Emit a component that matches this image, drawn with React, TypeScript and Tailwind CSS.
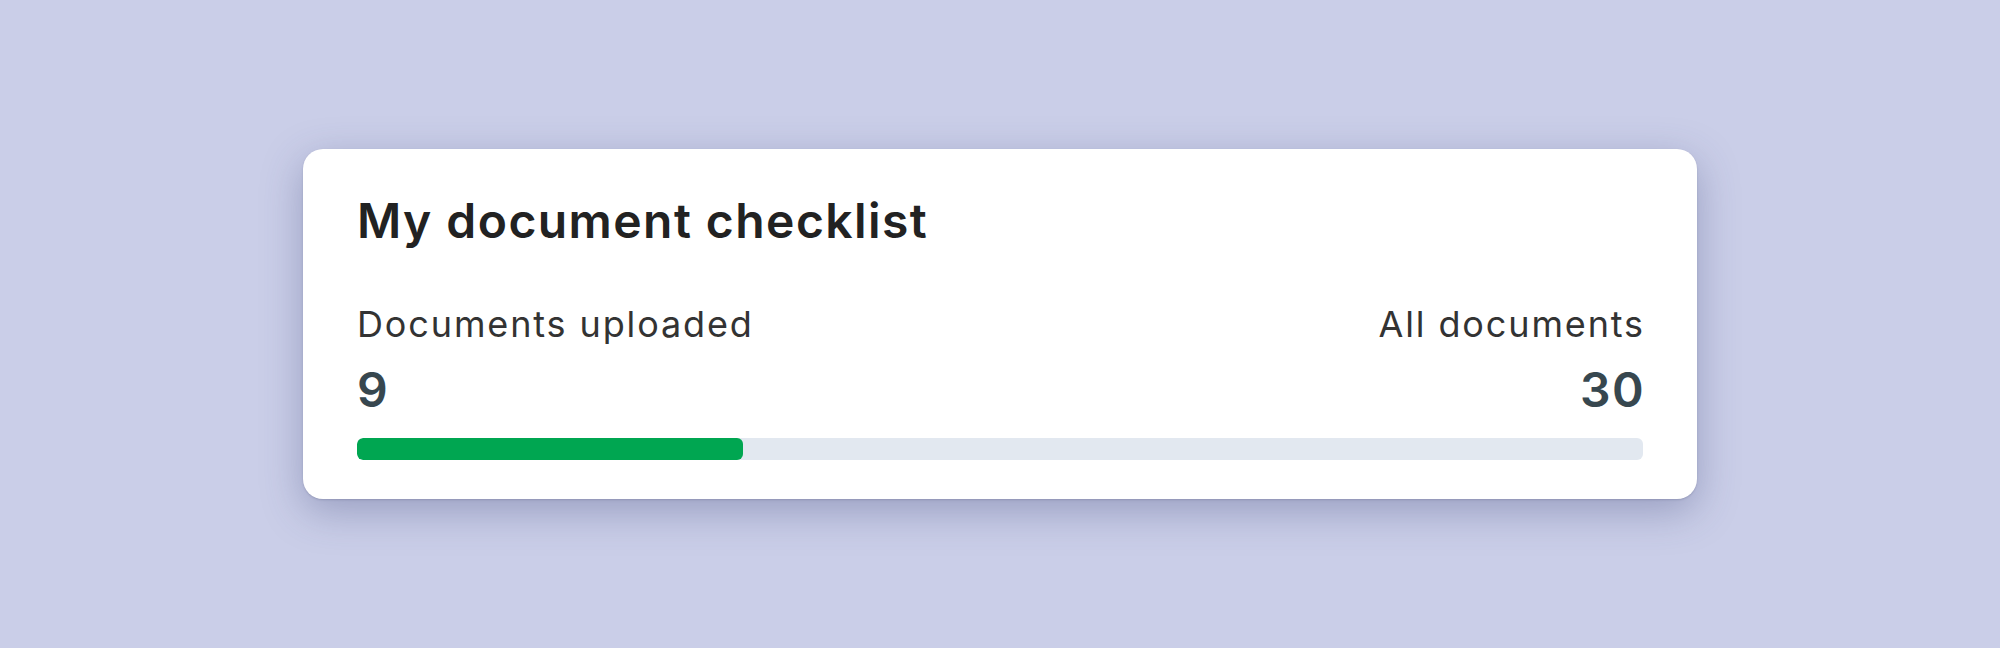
export default function App() {
  const uploaded = 9;
  const total = 30;
  const pct = (uploaded / total) * 100;

  return (
    <div
      className="flex h-[648px] w-full items-center justify-center bg-[#cacee8]"
      style={{ fontFamily: "Inter, 'Noto Sans', sans-serif" }}
    >
      <div className="w-[1394px] rounded-[20px] bg-white px-[54px] pt-[43px] pb-[39px] shadow-[0_1px_2px_rgba(40,45,80,0.18),0_12px_40px_rgba(60,68,120,0.35)]">
        <h2 className="text-[48px] leading-[58px] font-semibold tracking-[0.03em] text-[#222222]">
          My document checklist
        </h2>

        <div className="mt-[52px] flex items-start justify-between">
          <div className="flex flex-col">
            <span className="text-[36px] leading-[44px] tracking-[0.052em] text-[#333333]">
              Documents uploaded
            </span>
            <span className="mt-[15px] text-[48px] leading-[58px] font-semibold tracking-[0.03em] text-[#37474f]">
              {uploaded}
            </span>
          </div>
          <div className="-mr-[2px] flex flex-col items-end">
            <span className="text-[36px] leading-[44px] tracking-[0.052em] text-[#333333]">
              All documents
            </span>
            <span className="mt-[15px] text-[48px] leading-[58px] font-semibold tracking-[0.03em] text-[#37474f]">
              {total}
            </span>
          </div>
        </div>

        <div className="mt-[19px] h-[22px] w-full overflow-hidden rounded-[6px] bg-[#e2e8f0]">
          <div className="h-full rounded-[6px] bg-[#00a651]" style={{ width: `${pct}%` }} />
        </div>
      </div>
    </div>
  );
}
